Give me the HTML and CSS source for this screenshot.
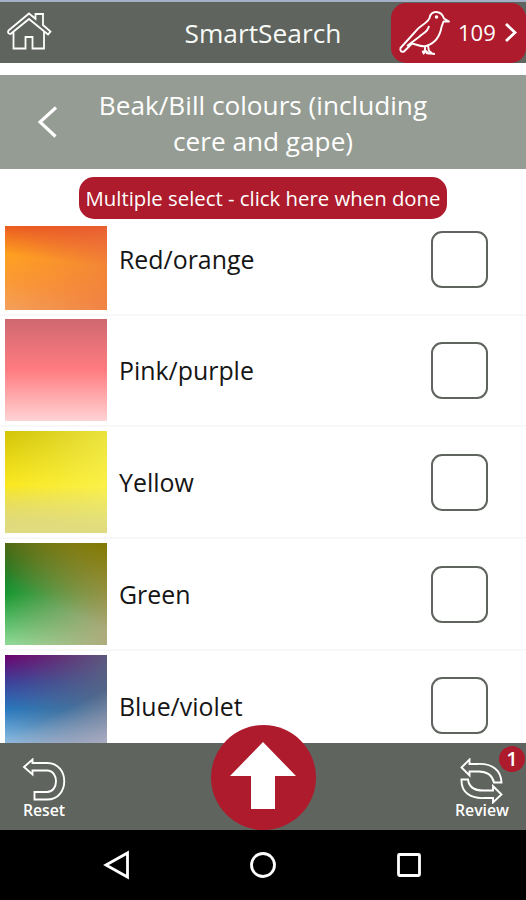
FILE: index.html
```html
<!DOCTYPE html>
<html lang="en">
<head>
<meta charset="utf-8">
<title>SmartSearch</title>
<link rel="stylesheet" href="styles.css">
</head>
<body>
<div class="app">
  <header class="topbar">
    <svg class="home" viewBox="0 0 46 40" width="46" height="40"><path d="M6.500 19.500V36.500H18.500V25H25.500V36.500H37V19.500M1.500 18.500L22 1.500L28.500 6.800V2H36V13L43.500 19.500L41 22.500L22 7L3.500 22Q0 21.500 1.500 18.500Z"/></svg>
    <h1 class="title">SmartSearch</h1>
    <div class="results">
      <svg class="bird" viewBox="0 0 54 48" width="54" height="48"><path d="M51 12.500L46 9.500C43 1 33 1 31.500 9C30 14 22 16 17 23L2.500 39Q1.500 43.500 6 42.500L14 34.500C18 35 23 38.500 28 37C38 34 42 27 43.500 18L45.500 12.500Z"/><path d="M31 17C30 23 25 24 21 28L9 37M27 38V42L24 43M30 37L31 42L34 44M25 45L28 42L31 45M28 44L37 45"/><circle cx="38.500" cy="8" r=".8"/></svg>
      <span class="count">109</span>
      <svg class="next" viewBox="0 0 14 22" width="14" height="22"><path d="M2 2L11 10.500L2 19"/></svg>
    </div>
  </header>
  <div class="subheader">
    <svg class="back" viewBox="0 0 20 32" width="20" height="32"><path d="M18 1.500L2 16L17.500 30.500"/></svg>
    <h2 class="question">Beak/Bill colours (including<br>cere and gape)</h2>
  </div>
  <div class="done-row"><button class="done">Multiple select - click here when done</button></div>
  <main class="list">
    <div class="row"><i class="swatch red"></i><span class="label">Red/orange</span><i class="check"></i></div>
    <div class="row"><i class="swatch pink"></i><span class="label">Pink/purple</span><i class="check"></i></div>
    <div class="row"><i class="swatch yellow"></i><span class="label">Yellow</span><i class="check"></i></div>
    <div class="row"><i class="swatch green"></i><span class="label">Green</span><i class="check"></i></div>
    <div class="row"><i class="swatch blue"></i><span class="label">Blue/violet</span><i class="check"></i></div>
  </main>
  <footer class="toolbar">
    <div class="tool reset">
      <svg viewBox="0 0 44 44" width="44" height="44"><path d="M2 9L10.500 1.500V5H25C48 5 48 41.500 25 41.500H12.500V34H25C37 34 37 12.500 25 12.500H10.500V16.500Z"/></svg>
      <span>Reset</span>
    </div>
    <div class="up"><svg viewBox="0 0 66 67" width="66" height="67"><path d="M33 0L66 34H45V67H21V34H0Z"/></svg></div>
    <div class="tool review">
      <svg viewBox="0 0 44 46" width="44" height="46"><path d="M1.500 9.500L9.500 1.500V6H17C33 5 41 13 41.500 24.500H34C32 16 26 13 17 13.500H9.500V17.500ZM1.500 21.500H8C9 29 15 33 25 32.500H33V28L41.500 36.500L33 44.500V40H25C10 41 1 34 1.500 21.500Z"/></svg>
      <span>Review</span>
      <b class="badge">1</b>
    </div>
  </footer>
  <nav class="system">
    <svg viewBox="0 0 28 30" width="28" height="30"><path d="M3 15L24.500 3V27Z"/></svg>
    <svg viewBox="0 0 28 30" width="28" height="30"><circle cx="14" cy="15" r="11.500"/></svg>
    <svg viewBox="0 0 28 30" width="28" height="30"><rect x="3.500" y="4.500" width="21" height="21" rx="1"/></svg>
  </nav>
</div>
</body>
</html>
```
FILE: styles.css
```css
* { box-sizing: border-box; }
body { margin: 0; background: #fff; font-family: "Open Sans", sans-serif; color: #151515; }
svg { display: block; fill: none; stroke: #fff; flex: none; }
h1, h2 { margin: 0; font-weight: 400; }
.app { width: 526px; height: 900px; display: flex; flex-direction: column; overflow: hidden; }

.topbar { height: 63px; flex: none; border-top: 2px solid #a5b0c8; background: #5f645e; display: grid; grid-template-columns: 135px 256px 135px; align-items: center; margin-bottom: 12px; }
.home { margin: -1px 0 0 7px; stroke-width: 1.800; }
.title { color: #f8faf7; font-size: 26.300px; line-height: 34px; text-align: center; white-space: nowrap; }
.results { height: 60px; background: #ad1b2d; border-radius: 15px; display: flex; align-items: center; color: #fff; }
.bird { margin: 1px 0 0 7px; stroke-width: 1.900; stroke-linejoin: round; }
.count { font-size: 22px; margin: -2px 0 0 6px; width: 46px; }
.next { stroke-width: 2.800; }

.subheader { height: 94px; flex: none; background: #959c93; display: grid; grid-template-columns: 90px 346px 90px; align-items: center; }
.back { margin-left: 38px; stroke-width: 3.200; }
.question { color: #fff; font-size: 26.200px; line-height: 36px; text-align: center; white-space: nowrap; padding-top: 1px; }

.done-row { height: 57px; flex: none; padding-top: 8px; display: flex; justify-content: center; }
.done { width: 368px; height: 42px; border: 0; border-radius: 15px; padding: 0; background: #ad1b2d; color: #fff; font: 20.350px "Open Sans", sans-serif; white-space: nowrap; }

.list { height: 516.500px; flex: none; overflow: hidden; display: flex; flex-direction: column; }
.row { height: 111.800px; flex: none; border-bottom: 2px solid #f8f8f8; padding: 0 38px 0 5px; display: flex; align-items: center; }
.row:first-child { height: 89.600px; align-items: flex-start; }
.row:first-child .swatch { height: 84px; }
.row:first-child .label { margin-top: 16px; }
.row:first-child .check { margin-top: 5px; }
.swatch { width: 102px; height: 102px; flex: none; }
.label { flex: 1; margin-left: 12px; font-size: 24.900px; line-height: 34px; }
.check { width: 57px; height: 57px; border: 2px solid #5f645e; border-radius: 11px; }
.red { background: linear-gradient(90deg, #ec754400, #ec7544a0), linear-gradient(187deg, #e33c15 0, #ee6820 18%, #ffa11f 42%, #fb9a35 70%, #f3a05c 100%); }
.pink { background: linear-gradient(#cf6871, #ff7c80 50%, #ffd3d5); }
.yellow { background: linear-gradient(#e0dc8000 55%, #dfdb80 100%), linear-gradient(90deg, #fbf66300, #fbf66399), linear-gradient(#d2c408, #f9e81f 52%, #dfd57c); }
.green { background: linear-gradient(205deg, #827900 0, #82790000 58%), linear-gradient(90deg, #b5a57b00 0, #b5a57be0 100%), linear-gradient(#205b20, #179830 50%, #8fdb98); }
.blue { background: linear-gradient(155deg, #bdb9cf00 55%, #bdb9cf 100%), linear-gradient(90deg, #5a6b8200, #5a6b82d0), linear-gradient(#6d006d, #3c419b 27%, #2878bd 53%, #70acd9 77%, #b5d0ef); }

.toolbar { height: 87.500px; flex: none; background: #5f645e; display: grid; grid-template-columns: 88px 350px 88px; justify-items: center; position: relative; }
.tool { color: #fff; font-size: 15.800px; font-weight: 600; line-height: 20px; display: flex; flex-direction: column; align-items: center; position: relative; padding-top: 15px; width: 88px; }
.tool svg { stroke-width: 1.900; }
.tool span { margin-top: -4px; }
.reset span { margin-top: -2px; }
.badge { position: absolute; top: 3px; right: 1px; width: 26px; height: 26px; border-radius: 50%; background: #ad1b2d; font-weight: 600; font-size: 20px; line-height: 26px; text-align: center; }
.up { width: 105px; height: 105px; margin-top: -17.500px; border-radius: 50%; background: #ad1b2d; display: flex; align-items: center; justify-content: center; z-index: 1; }
.up svg { fill: #fff; stroke: none; margin-top: -4px; }
.system { flex: 1; background: #000; display: flex; justify-content: center; gap: 118px; align-items: center; }
.system svg { stroke-width: 2.800; }
```
